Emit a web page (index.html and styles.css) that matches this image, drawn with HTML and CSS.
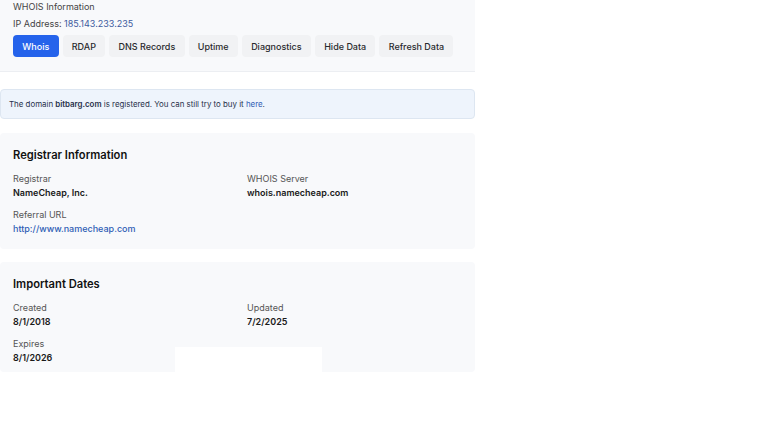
FILE: index.html
```html
<!DOCTYPE html>
<html lang="en">
<head>
  <meta charset="UTF-8" />
  <title>WHOIS - bitbarg.com</title>
  <link rel="stylesheet" href="styles.css">
</head>
<body>
  <div class="page">
    <div class="header">
      <div class="title">WHOIS Information</div>
      <div class="ip">IP Address: <span class="ip-num">185.143.233.235</span></div>
      <div class="tabs">
        <button class="tab active">Whois</button>
        <button class="tab">RDAP</button>
        <button class="tab">DNS Records</button>
        <button class="tab">Uptime</button>
        <button class="tab">Diagnostics</button>
        <button class="tab">Hide Data</button>
        <button class="tab">Refresh Data</button>
      </div>
    </div>

    <div class="alert">
      The domain <b>bitbarg.com</b> is registered. You can still try to buy it <a href="#">here</a>.
    </div>

    <div class="card">
      <h2>Registrar Information</h2>
      <div class="fields">
        <div class="field">
          <div class="label">Registrar</div>
          <div class="value">NameCheap, Inc.</div>
        </div>
        <div class="field">
          <div class="label">WHOIS Server</div>
          <div class="value">whois.namecheap.com</div>
        </div>
        <div class="field">
          <div class="label">Referral URL</div>
          <a class="value link" href="#">http://www.namecheap.com</a>
        </div>
      </div>
    </div>

    <div class="card dates">
      <h2>Important Dates</h2>
      <div class="fields">
        <div class="field">
          <div class="label">Created</div>
          <div class="value">8/1/2018</div>
        </div>
        <div class="field">
          <div class="label">Updated</div>
          <div class="value">7/2/2025</div>
        </div>
        <div class="field">
          <div class="label">Expires</div>
          <div class="value">8/1/2026</div>
        </div>
      </div>
      <div class="blank"></div>
    </div>
  </div>
</body>
</html>
```

FILE: styles.css
```css
body {
  margin: 0;
  background: #fff;
  font-family: Inter, "Noto Sans", sans-serif;
  color: #1c1c1e;
}

.page {
  width: 475px;
}

.header {
  background: #f8f9fb;
  padding: 0 13px 14px;
  border-bottom: 1px solid #eceef2;
}

.title {
  font-size: 9px;
  line-height: 13px;
  color: #444;
}

.ip {
  margin-top: 4px;
  font-size: 9px;
  line-height: 13px;
  color: #444;
}

.ip-num {
  color: #3d5a9e;
}

.tabs {
  display: flex;
  gap: 4px;
  margin-top: 5px;
}

.tab {
  flex-shrink: 0;
  white-space: nowrap;
  height: 22px;
  padding: 0 9.25px;
  border: none;
  border-radius: 4px;
  background: #f1f2f4;
  font-family: Inter, sans-serif;
  font-size: 9px;
  font-weight: 500;
  color: #2a2a2e;
}

.tab.active {
  background: #2563eb;
  color: #fff;
}

.alert {
  margin-top: 17px;
  height: 28px;
  line-height: 28px;
  padding: 0 8px;
  background: #eef4fc;
  border: 1px solid #dde6f1;
  border-radius: 4px;
  font-size: 7.9px;
  color: #27304a;
}

.alert b {
  font-weight: 600;
}

.alert a {
  color: #2f5db5;
  text-decoration: none;
}

.card {
  margin-top: 14px;
  background: #f8f9fb;
  border-radius: 4px;
  padding: 13px 13px 13px;
  position: relative;
}

.card.dates {
  margin-top: 13px;
  padding-bottom: 7px;
}

.card h2 {
  margin: 0 0 8px;
  font-size: 11.2px;
  line-height: 18px;
  font-weight: 600;
  color: #111;
}

.fields {
  display: grid;
  grid-template-columns: 234px 1fr;
  row-gap: 8px;
}

.label {
  font-size: 9px;
  line-height: 14px;
  color: #555;
}

.value {
  display: block;
  font-size: 9px;
  line-height: 14px;
  font-weight: 600;
  color: #1a1a1a;
}

.value.link {
  font-weight: 500;
  color: #2f5db5;
  text-decoration: none;
}

.blank {
  position: absolute;
  left: 175px;
  top: 85px;
  width: 147px;
  height: 30px;
  background: #fff;
}
```
